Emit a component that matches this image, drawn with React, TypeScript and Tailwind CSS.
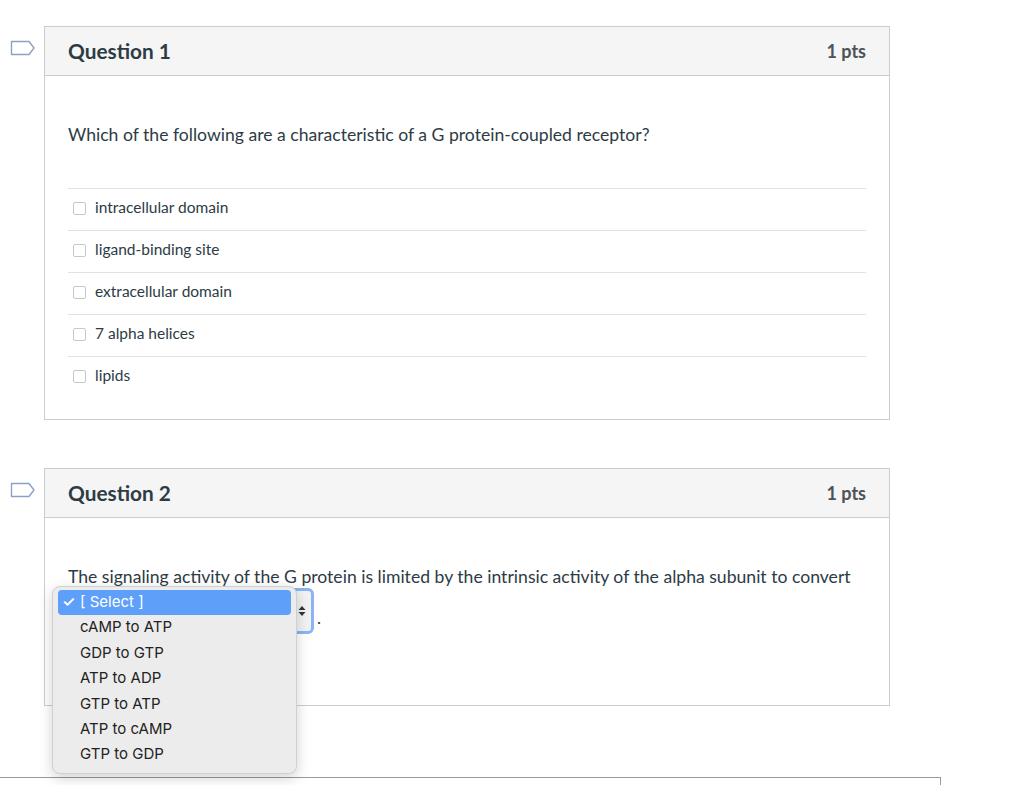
import React from 'react';

const answers = [
  'intracellular domain',
  'ligand-binding site',
  'extracellular domain',
  '7 alpha helices',
  'lipids',
];

const options = [
  'cAMP to ATP',
  'GDP to GTP',
  'ATP to ADP',
  'GTP to ATP',
  'ATP to cAMP',
  'GTP to GDP',
];

const Flag: React.FC = () => (
  <svg width="26" height="16" viewBox="0 0 26 16" className="block">
    <path
      d="M1.5 1.5 H19 L24 8 L19 14.5 H1.5 Z"
      fill="none"
      stroke="#8aa3c4"
      strokeWidth="1.4"
      strokeLinejoin="round"
    />
  </svg>
);

const QuestionHeader: React.FC<{ title: string }> = ({ title }) => (
  <div className="flex h-[49px] items-center justify-between border-b border-[#c7cdd1] bg-[#f5f5f5] px-[23px]">
    <h2 className="text-[20.8px] font-bold text-[#2d3b45]">{title}</h2>
    <span className="text-[18px] font-bold text-[#4d5257]">1 pts</span>
  </div>
);

const App: React.FC = () => {
  return (
    <div
      className="relative h-[785px] w-[1024px] overflow-hidden bg-white text-[#2d3b45]"
      style={{ fontFamily: 'Lato, "Noto Sans", sans-serif' }}
    >
      <div className="pt-[26px]">
        {/* Question 1 */}
        <div className="flex">
          <div className="w-[44px] pl-[10px] pt-[14px]">
            <Flag />
          </div>
          <div className="w-[846px] border border-[#c7cdd1]">
            <QuestionHeader title="Question 1" />
            <div className="px-[23px] pb-[21px] pt-[49px]">
              <p className="text-[17.6px] leading-[20px]">
                Which of the following are a characteristic of a G protein-coupled receptor?
              </p>
              <div className="mt-[43px]">
                {answers.map((a) => (
                  <label
                    key={a}
                    className="flex h-[42px] items-center border-t border-[#dfe3e6] pb-[3px] pl-[5px]"
                  >
                    <span className="h-[13px] w-[13px] rounded-[2px] border border-[#c8c8c8] bg-white" />
                    <span className="ml-[9px] text-[15.5px] text-[#2d3b45]">{a}</span>
                  </label>
                ))}
              </div>
            </div>
          </div>
        </div>

        {/* Question 2 */}
        <div className="mt-[48px] flex">
          <div className="w-[44px] pl-[10px] pt-[14px]">
            <Flag />
          </div>
          <div className="w-[846px] border border-[#c7cdd1]">
            <QuestionHeader title="Question 2" />
            <div className="h-[187px] px-[23px] pt-[49px]">
              <p className="text-[17.6px] leading-[20px]">
                The signaling activity of the G protein is limited by the intrinsic activity of the alpha subunit to convert
              </p>
              <div className="mt-[1px] flex items-end">
                <div className="relative h-[46px] w-[246px] rounded-[6px] border-[3px] border-[#8ab4f3] bg-[#f2f2f2]">
                  <span className="absolute right-[5px] top-[14px] flex flex-col items-center">
                    <svg width="8" height="12" viewBox="0 0 8 12">
                      <path d="M4 1 L7.5 5 H0.5 Z" fill="#333" />
                      <path d="M4 11 L7.5 7 H0.5 Z" fill="#333" />
                    </svg>
                  </span>

                  {/* open option list */}
                  <div
                    className="absolute left-[-19px] top-[-5px] z-10 w-[245px] rounded-[8px] border border-[#d0d0d0] bg-[#ececec] px-[5px] pb-[6px] pt-[3px] shadow-[0_4px_14px_rgba(0,0,0,0.18)]"
                    style={{ fontFamily: 'Inter, "Liberation Sans", sans-serif' }}
                  >
                    <div className="flex h-[25px] items-center rounded-[4px] bg-[#5d9ff9] text-[15px] text-white">
                      <span className="w-[22px] pl-[4px] text-[15px] font-semibold">✓</span>
                      <span>[ Select ]</span>
                    </div>
                    {options.map((o) => (
                      <div key={o} className="flex h-[25.4px] items-center pl-[22px] text-[15px] text-[#222]">
                        {o}
                      </div>
                    ))}
                  </div>
                </div>
                <span className="mb-[4px] ml-[3px] text-[17px]">.</span>
              </div>
            </div>
          </div>
        </div>

        {/* next card, top edge */}
        <div className="mt-[71px] h-[20px] w-[941px] border-r border-t border-[#9a9a9a]" />
      </div>
    </div>
  );
};

export default App;
